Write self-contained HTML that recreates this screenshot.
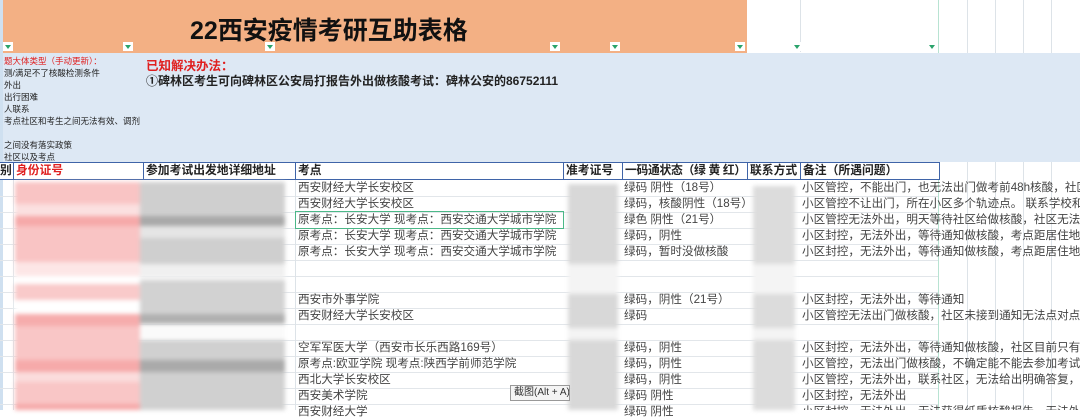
<!DOCTYPE html>
<html><head><meta charset="utf-8"><style>
*{margin:0;padding:0;box-sizing:border-box}
body{width:1080px;height:410px;overflow:hidden;background:#fff;position:relative;font-family:"Liberation Sans","Noto Sans CJK SC",sans-serif;color:#444}
.a{position:absolute}
.t{position:absolute;font-size:11.6px;line-height:16px;white-space:nowrap;color:#444}
.vl{position:absolute;width:1px;background:#dde3e8}
.hl{position:absolute;height:1px;background:#e2e6ea}
.dd{position:absolute;width:10px;height:9px;background:#fff;top:42px}
.dd:after{content:"";position:absolute;left:2px;top:3px;border-left:3px solid transparent;border-right:3px solid transparent;border-top:4px solid #2aa36b}
.h{position:absolute;top:162px;height:18px;border:1.5px solid #3f64a8;background:#fff;font-size:11.8px;font-weight:bold;line-height:15px;padding-left:2px;color:#222;white-space:nowrap;overflow:hidden}
.bl{filter:blur(2px)}
</style></head><body>
<div class="vl" style="left:938px;top:0;height:410px;background:#b8e3d2"></div>
<div class="vl" style="left:967px;top:0;height:410px"></div>
<div class="vl" style="left:995px;top:0;height:410px"></div>
<div class="vl" style="left:1023px;top:0;height:410px"></div>
<div class="vl" style="left:1051px;top:0;height:410px"></div>
<div class="vl" style="left:800px;top:0;height:52px"></div>
<div class="a" style="left:0;top:0;width:747px;height:53px;background:#f3b084"></div>
<div class="a" style="left:0;top:0;width:3px;height:410px;background:#cfe0f0"></div>
<div class="a" style="left:190px;top:11px;font-size:25px;font-weight:bold;color:#111;white-space:nowrap">22西安疫情考研互助表格</div>
<div class="dd" style="left:3px"></div><div class="dd" style="left:123px"></div><div class="dd" style="left:265px"></div><div class="dd" style="left:550px"></div><div class="dd" style="left:610px"></div><div class="dd" style="left:735px"></div><div class="dd" style="left:792px"></div><div class="dd" style="left:927px"></div>
<div class="a" style="left:3px;top:53px;width:1077px;height:109px;background:#dde8f4"></div>
<div class="a" style="left:4px;top:55px;font-size:8.5px;line-height:12px;color:#222;white-space:nowrap">
<span style="color:#e02020">题大体类型（手动更新）：</span><br>测/满足不了核酸检测条件<br>外出<br>出行困难<br>人联系<br>考点社区和考生之间无法有效、调剂<br><br>之间没有落实政策<br>社区以及考点</div>
<div class="a" style="left:146px;top:55px;font-size:12.5px;font-weight:bold;color:#e02020">已知解决办法：</div>
<div class="a" style="left:146px;top:72px;font-size:12px;font-weight:bold;color:#222;white-space:nowrap">①碑林区考生可向碑林区公安局打报告外出做核酸考试：碑林公安的86752111</div>
<div class="h" style="left:0;width:14px;border-left:none;padding-left:0">别</div>
<div class="h" style="left:13px;width:131px;color:#e02020">身份证号</div>
<div class="h" style="left:143px;width:153px">参加考试出发地详细地址</div>
<div class="h" style="left:295px;width:269px">考点</div>
<div class="h" style="left:563px;width:60px">准考证号</div>
<div class="h" style="left:622px;width:126px;letter-spacing:-0.3px">一码通状态（绿 黄 红）</div>
<div class="h" style="left:747px;width:54px">联系方式</div>
<div class="h" style="left:800px;width:140px">备注（所遇问题）</div>
<div class="hl" style="left:0;top:196px;width:938px"></div><div class="hl" style="left:0;top:212px;width:938px"></div><div class="hl" style="left:0;top:228px;width:938px"></div><div class="hl" style="left:0;top:244px;width:938px"></div><div class="hl" style="left:0;top:260px;width:938px"></div><div class="hl" style="left:0;top:276px;width:938px"></div><div class="hl" style="left:0;top:292px;width:938px"></div><div class="hl" style="left:0;top:308px;width:938px"></div><div class="hl" style="left:0;top:324px;width:938px"></div><div class="hl" style="left:0;top:340px;width:938px"></div><div class="hl" style="left:0;top:356px;width:938px"></div><div class="hl" style="left:0;top:372px;width:938px"></div><div class="hl" style="left:0;top:388px;width:938px"></div><div class="hl" style="left:0;top:404px;width:938px"></div>
<div class="vl" style="left:295px;top:180px;height:230px"></div>
<div class="vl" style="left:13px;top:180px;height:230px"></div>
<div class="bl">
<div class="a" style="left:15px;top:182px;width:125px;height:110px;background:#f9c4c4"></div>
<div class="a" style="left:15px;top:204px;width:125px;height:12px;background:#fbe0e0"></div>
<div class="a" style="left:15px;top:216px;width:125px;height:10px;background:#f6a9a9"></div>
<div class="a" style="left:15px;top:262px;width:125px;height:14px;background:#fde6e6"></div>
<div class="a" style="left:15px;top:276px;width:125px;height:8px;background:#fff"></div>
<div class="a" style="left:15px;top:284px;width:125px;height:30px;background:#f9caca"></div>
<div class="a" style="left:15px;top:300px;width:125px;height:14px;background:#fff"></div>
<div class="a" style="left:15px;top:314px;width:125px;height:12px;background:#f6acac"></div>
<div class="a" style="left:15px;top:326px;width:125px;height:84px;background:#f9c6c6"></div>
<div class="a" style="left:15px;top:360px;width:125px;height:12px;background:#f6aaaa"></div>
<div class="a" style="left:15px;top:372px;width:125px;height:10px;background:#fbdcdc"></div>
<div class="a" style="left:15px;top:404px;width:125px;height:6px;background:#f6a9a9"></div>
<div class="a" style="left:140px;top:182px;width:145px;height:95px;background:#cfcfcf"></div>
<div class="a" style="left:140px;top:216px;width:145px;height:10px;background:#a9a9a9"></div>
<div class="a" style="left:140px;top:226px;width:145px;height:12px;background:#e5e5e5"></div>
<div class="a" style="left:140px;top:264px;width:145px;height:14px;background:#f0f0f0"></div>
<div class="a" style="left:140px;top:280px;width:145px;height:40px;background:#d2d2d2"></div>
<div class="a" style="left:140px;top:314px;width:145px;height:10px;background:#b0b0b0"></div>
<div class="a" style="left:140px;top:326px;width:145px;height:12px;background:#fafafa"></div>
<div class="a" style="left:140px;top:340px;width:145px;height:70px;background:#d0d0d0"></div>
<div class="a" style="left:140px;top:360px;width:145px;height:12px;background:#aaaaaa"></div>
<div class="a" style="left:568px;top:184px;width:50px;height:226px;background:#d8d8d8"></div>
<div class="a" style="left:568px;top:264px;width:50px;height:30px;background:#f4f4f4"></div>
<div class="a" style="left:568px;top:328px;width:50px;height:12px;background:#f4f4f4"></div>
<div class="a" style="left:753px;top:186px;width:42px;height:224px;background:#dcdcdc"></div>
<div class="a" style="left:753px;top:264px;width:42px;height:30px;background:#f4f4f4"></div>
<div class="a" style="left:753px;top:328px;width:42px;height:12px;background:#f4f4f4"></div>
</div>
<div class="a" style="left:295px;top:211px;width:269px;height:18px;border:1.5px solid #4cb888"></div>
<div class="t" style="left:298px;top:180px">西安财经大学长安校区</div>
<div class="t" style="left:298px;top:196px">西安财经大学长安校区</div>
<div class="t" style="left:298px;top:212px">原考点：长安大学 现考点：西安交通大学城市学院</div>
<div class="t" style="left:298px;top:228px">原考点：长安大学 现考点：西安交通大学城市学院</div>
<div class="t" style="left:298px;top:244px">原考点：长安大学 现考点：西安交通大学城市学院</div>
<div class="t" style="left:298px;top:292px">西安市外事学院</div>
<div class="t" style="left:298px;top:308px">西安财经大学长安校区</div>
<div class="t" style="left:298px;top:340px">空军军医大学（西安市长乐西路169号）</div>
<div class="t" style="left:298px;top:356px">原考点:欧亚学院 现考点:陕西学前师范学院</div>
<div class="t" style="left:298px;top:372px">西北大学长安校区</div>
<div class="t" style="left:298px;top:388px">西安美术学院</div>
<div class="t" style="left:298px;top:404px">西安财经大学</div>
<div class="t" style="left:624px;top:180px">绿码 阴性（18号）</div>
<div class="t" style="left:624px;top:196px">绿码，核酸阴性（18号）</div>
<div class="t" style="left:624px;top:212px">绿色 阴性（21号）</div>
<div class="t" style="left:624px;top:228px">绿码，阴性</div>
<div class="t" style="left:624px;top:244px">绿码，暂时没做核酸</div>
<div class="t" style="left:624px;top:292px">绿码，阴性（21号）</div>
<div class="t" style="left:624px;top:308px">绿码</div>
<div class="t" style="left:624px;top:340px">绿码，阴性</div>
<div class="t" style="left:624px;top:356px">绿码，阴性</div>
<div class="t" style="left:624px;top:372px">绿码，阴性</div>
<div class="t" style="left:624px;top:388px">绿码 阴性</div>
<div class="t" style="left:624px;top:404px">绿码 阴性</div>
<div class="a" style="left:802px;top:180px;width:278px;height:230px;overflow:hidden">
<div class="t" style="left:0;top:0">小区管控，不能出门，也无法出门做考前48h核酸，社区</div>
<div class="t" style="left:0;top:16px">小区管控不让出门，所在小区多个轨迹点。 联系学校和</div>
<div class="t" style="left:0;top:32px">小区管控无法外出，明天等待社区给做核酸，社区无法</div>
<div class="t" style="left:0;top:48px">小区封控，无法外出，等待通知做核酸，考点距居住地</div>
<div class="t" style="left:0;top:64px">小区封控，无法外出，等待通知做核酸，考点距居住地</div>
<div class="t" style="left:0;top:112px">小区封控，无法外出，等待通知</div>
<div class="t" style="left:0;top:128px">小区管控无法出门做核酸，社区未接到通知无法点对点</div>
<div class="t" style="left:0;top:160px">小区封控，无法外出，等待通知做核酸，社区目前只有</div>
<div class="t" style="left:0;top:176px">小区管控，无法出门做核酸，不确定能不能去参加考试</div>
<div class="t" style="left:0;top:192px">小区管控，无法外出，联系社区，无法给出明确答复，</div>
<div class="t" style="left:0;top:208px">小区封控，无法外出</div>
<div class="t" style="left:0;top:224px">小区封控，无法外出，无法获得纸质核酸报告，无法外</div>
</div>
<div class="a" style="left:510px;top:385px;width:60px;height:16px;background:#f4f4f4;border:1px solid #999;font-size:10px;line-height:14px;padding-left:3px;color:#333;white-space:nowrap;overflow:hidden">截图(Alt + A)</div>
</body></html>
